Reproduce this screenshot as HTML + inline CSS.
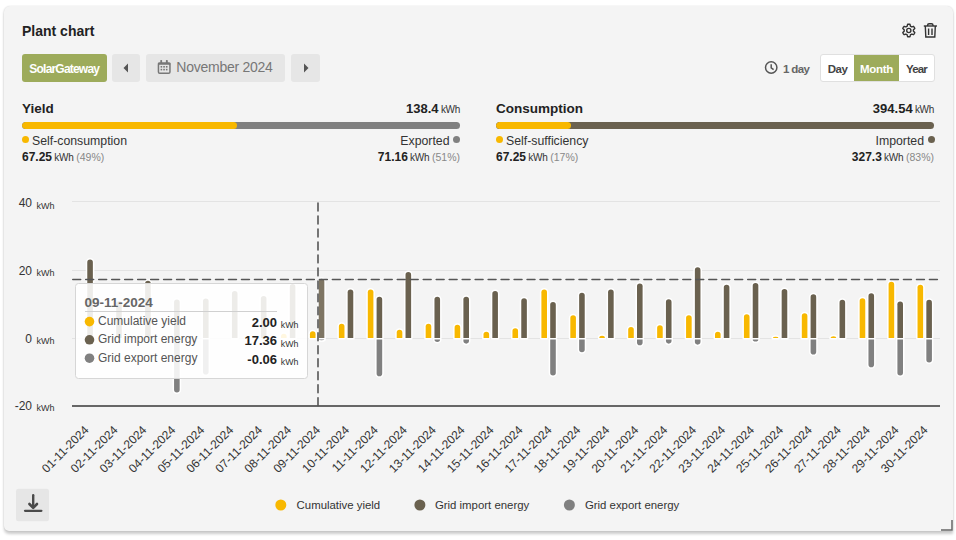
<!DOCTYPE html>
<html><head><meta charset="utf-8">
<style>
html,body{margin:0;padding:0;background:#fff;width:956px;height:540px;overflow:hidden;}
*{box-sizing:border-box;}
body{font-family:"Liberation Sans",sans-serif;color:#333;position:relative;}
.card{position:absolute;left:3.5px;top:6px;width:949.5px;height:524.7px;background:#f4f4f4;border-radius:6px 6px 0 5px;
 box-shadow:0 2.5px 3px rgba(0,0,0,0.2),0 0 1.5px rgba(0,0,0,0.14);}
.abs{position:absolute;white-space:nowrap;}
.btn{position:absolute;border-radius:3px;}
</style></head><body>
<div class="card"></div>
<div class="abs" style="left:22px;top:23px;font-size:14px;font-weight:bold;color:#222;line-height:17px;">Plant chart</div>

<svg class="abs" style="left:0;top:0" width="956" height="540" viewBox="0 0 956 540">
 <!-- gear -->
 <g fill="none" stroke="#333" stroke-width="1.4">
  <path d="M908.8,24.2L909.2,24.2L909.6,24.3L910.0,24.3L910.2,25.1L910.3,25.9L910.6,26.3L910.8,26.4L911.1,26.5L911.4,26.7L911.6,26.9L912.0,26.9L912.7,26.6L913.5,26.3L913.8,26.7L914.0,27.0L914.3,27.4L914.5,27.7L914.6,28.1L914.8,28.5L914.2,29.1L913.5,29.6L913.4,29.9L913.4,30.2L913.4,30.5L913.4,30.8L913.4,31.1L913.5,31.4L914.2,31.9L914.8,32.5L914.6,32.9L914.5,33.3L914.3,33.6L914.0,34.0L913.8,34.3L913.5,34.7L912.7,34.4L912.0,34.1L911.6,34.1L911.4,34.3L911.1,34.5L910.8,34.6L910.6,34.7L910.3,35.1L910.2,35.9L910.0,36.7L909.6,36.7L909.2,36.8L908.8,36.8L908.4,36.8L908.0,36.7L907.6,36.7L907.4,35.9L907.3,35.1L907.0,34.7L906.8,34.6L906.5,34.5L906.2,34.3L906.0,34.1L905.6,34.1L904.9,34.4L904.1,34.7L903.8,34.3L903.6,34.0L903.3,33.7L903.1,33.3L903.0,32.9L902.8,32.5L903.4,31.9L904.1,31.4L904.2,31.1L904.2,30.8L904.2,30.5L904.2,30.2L904.2,29.9L904.1,29.6L903.4,29.1L902.8,28.5L903.0,28.1L903.1,27.7L903.3,27.3L903.6,27.0L903.8,26.7L904.1,26.3L904.9,26.6L905.6,26.9L906.0,26.9L906.2,26.7L906.5,26.5L906.8,26.4L907.0,26.3L907.3,25.9L907.4,25.1L907.6,24.3L908.0,24.3L908.4,24.2Z" stroke-linejoin="round"/>
  <circle cx="908.8" cy="30.5" r="2.1"/>
 </g>
 <!-- trash -->
 <g fill="none" stroke="#333" stroke-width="1.4">
  <path d="M923.8,26 h13.2"/>
  <path d="M927.6,26 V25.2 Q927.6,23.7 929.1,23.7 H931.5 Q933,23.7 933,25.2 V26"/>
  <path d="M925.3,26 L925.8,37 H934.8 L935.3,26"/>
  <path d="M928.6,28.5 v6.5 M932,28.5 v6.5"/>
 </g>
</svg>

<div class="btn" style="left:22px;top:54px;width:85px;height:28px;background:#9dab5b;color:#fff;font-weight:bold;font-size:12px;line-height:30px;text-align:center;letter-spacing:-0.8px;text-indent:-0.5px;">SolarGateway</div>
<div class="btn" style="left:112px;top:54px;width:28px;height:28px;background:#e6e6e6;"></div>
<svg class="abs" style="left:112px;top:54px" width="28" height="28"><path d="M11.5,14 L16,9.5 L16,18.5 Z" fill="#555"/></svg>
<div class="btn" style="left:146px;top:54px;width:139px;height:28px;background:#e6e6e6;"></div>
<svg class="abs" style="left:154px;top:57px" width="20" height="20" viewBox="0 0 20 20">
 <rect x="4.45" y="6.15" width="11.5" height="10.1" rx="1.3" fill="none" stroke="#777" stroke-width="1.5"/>
 <rect x="3.8" y="5.4" width="12.8" height="2.3" rx="1" fill="#777"/>
 <rect x="6.3" y="3.1" width="1.8" height="3" rx="0.6" fill="#777"/><rect x="11.9" y="3.1" width="1.9" height="3" rx="0.6" fill="#777"/>
 <g fill="#777"><rect x="6.6" y="9.0" width="1.6" height="1.6"/><rect x="9.25" y="9.0" width="1.6" height="1.6"/><rect x="11.9" y="9.0" width="1.6" height="1.6"/>
 <rect x="6.6" y="11.8" width="1.6" height="1.6"/><rect x="9.25" y="11.8" width="1.6" height="1.6"/><rect x="11.9" y="11.8" width="1.6" height="1.6"/></g>
</svg>
<div class="abs" style="left:176.3px;top:59.3px;font-size:14px;line-height:17px;color:#777;letter-spacing:-0.25px;">November 2024</div>
<div class="btn" style="left:291px;top:54px;width:29px;height:28px;background:#e6e6e6;"></div>
<svg class="abs" style="left:291px;top:54px" width="29" height="28"><path d="M17.5,14 L13,9.5 L13,18.5 Z" fill="#555"/></svg>

<svg class="abs" style="left:764px;top:60px" width="15" height="15" viewBox="0 0 15 15">
 <circle cx="7.2" cy="7.5" r="5.7" fill="none" stroke="#555" stroke-width="1.5"/>
 <path d="M7.2,4.2 V7.8 L9.6,9.6" fill="none" stroke="#555" stroke-width="1.5"/>
</svg>
<div class="abs" style="left:783px;top:61.5px;font-size:11.5px;line-height:15px;color:#666;font-weight:bold;letter-spacing:-0.65px;">1 day</div>

<div class="btn" style="left:820px;top:54px;width:115px;height:28px;background:#fff;border:1px solid #e0e0e0;border-radius:3px;"></div>
<div class="abs" style="left:854px;top:55px;width:45px;height:26px;background:#9dab5b;"></div>
<div class="abs" style="left:821px;top:55.5px;width:33px;line-height:26px;font-size:11.5px;font-weight:bold;text-align:center;color:#444;letter-spacing:-0.5px;">Day</div>
<div class="abs" style="left:854px;top:55.5px;width:45px;line-height:26px;font-size:11.5px;font-weight:bold;text-align:center;color:#fff;letter-spacing:-0.3px;">Month</div>
<div class="abs" style="left:899px;top:55.5px;width:35px;line-height:26px;font-size:11.5px;font-weight:bold;text-align:center;color:#444;letter-spacing:-0.85px;">Year</div>

<!-- yield -->
<div class="abs" style="left:22px;top:101px;font-size:13.5px;font-weight:bold;color:#222;line-height:15px;">Yield</div>
<div class="abs" style="left:300px;width:160px;top:101px;text-align:right;line-height:15px;color:#222;font-size:10px;"><b style="font-size:13px">138.4</b> <span style="font-size:10px;color:#333;letter-spacing:-0.3px;margin-left:-0.5px">kWh</span></div>
<div class="abs" style="left:22px;top:122px;width:438px;height:7px;border-radius:3.5px;background:#808080;overflow:hidden;"><div style="width:49%;height:7px;background:#f8b800;border-radius:3.5px;"></div></div>
<div class="abs" style="left:21.5px;top:136.3px;width:7px;height:7px;border-radius:50%;background:#f8b800;"></div>
<div class="abs" style="left:32px;top:133px;font-size:12.3px;line-height:16px;color:#333;">Self-consumption</div>
<div class="abs" style="left:300px;width:149.5px;top:133px;text-align:right;font-size:12.3px;line-height:16px;color:#333;">Exported</div>
<div class="abs" style="left:453px;top:136.3px;width:7px;height:7px;border-radius:50%;background:#808080;"></div>
<div class="abs" style="left:22px;top:150px;line-height:14px;color:#222;font-size:10px;"><b style="font-size:12px">67.25</b> <span style="font-size:10px;color:#333;letter-spacing:-0.3px;margin-left:-0.5px">kWh</span> <span style="font-size:10.5px;color:#888">(49%)</span></div>
<div class="abs" style="left:300px;width:160px;text-align:right;top:150px;line-height:14px;color:#222;font-size:10px;"><b style="font-size:12px">71.16</b> <span style="font-size:10px;color:#333;letter-spacing:-0.3px;margin-left:-0.5px">kWh</span> <span style="font-size:10.5px;color:#888">(51%)</span></div>

<!-- consumption -->
<div class="abs" style="left:496px;top:101px;font-size:13.5px;font-weight:bold;color:#222;line-height:15px;">Consumption</div>
<div class="abs" style="left:774px;width:160px;top:101px;text-align:right;line-height:15px;color:#222;font-size:10px;"><b style="font-size:13px">394.54</b> <span style="font-size:10px;color:#333;letter-spacing:-0.3px;margin-left:-0.5px">kWh</span></div>
<div class="abs" style="left:496px;top:122px;width:438px;height:7px;border-radius:3.5px;background:#6a614f;overflow:hidden;"><div style="width:calc(17% + 0.5px);height:7px;background:#f8b800;border-radius:3.5px;"></div></div>
<div class="abs" style="left:495.5px;top:136.3px;width:7px;height:7px;border-radius:50%;background:#f8b800;"></div>
<div class="abs" style="left:506px;top:133px;font-size:12.3px;line-height:16px;color:#333;">Self-sufficiency</div>
<div class="abs" style="left:774px;width:150px;top:133px;text-align:right;font-size:12.3px;line-height:16px;color:#333;">Imported</div>
<div class="abs" style="left:927.6px;top:136.3px;width:7px;height:7px;border-radius:50%;background:#6a614f;"></div>
<div class="abs" style="left:496px;top:150px;line-height:14px;color:#222;font-size:10px;"><b style="font-size:12px">67.25</b> <span style="font-size:10px;color:#333;letter-spacing:-0.3px;margin-left:-0.5px">kWh</span> <span style="font-size:10.5px;color:#888">(17%)</span></div>
<div class="abs" style="left:774px;width:160px;text-align:right;top:150px;line-height:14px;color:#222;font-size:10px;"><b style="font-size:12px">327.3</b> <span style="font-size:10px;color:#333;letter-spacing:-0.3px;margin-left:-0.5px">kWh</span> <span style="font-size:10.5px;color:#888">(83%)</span></div>

<!-- chart -->
<svg class="abs" style="left:0;top:0" width="956" height="540" viewBox="0 0 956 540" font-family="Liberation Sans, sans-serif">
 <g stroke="#e3e3e3" stroke-width="1">
  <path d="M72,201.5 H940 M72,270.5 H940 M72,338.5 H940"/>
 </g>
 <g font-size="12" fill="#333" text-anchor="end">
  <text x="32" y="206.7">40</text><text x="32" y="274.8">20</text><text x="32" y="342.8">0</text><text x="32" y="409.6">-20</text>
 </g>
 <g font-size="9" fill="#333">
  <text x="36.5" y="208.5">kWh</text><text x="36.5" y="275.9">kWh</text><text x="36.5" y="343.9">kWh</text><text x="36.5" y="411.1">kWh</text>
 </g>
 <g stroke="#fff" stroke-width="3" paint-order="stroke" stroke-linejoin="round">
<path d="M87.27,338.00 L87.27,262.23 A2.80,2.80 0 0 1 92.87,262.23 L92.87,338.00 Z" fill="#6a614f"/>
<path d="M116.20,338.00 L116.20,304.01 A2.80,2.80 0 0 1 121.80,304.01 L121.80,338.00 Z" fill="#6a614f"/>
<path d="M145.13,338.00 L145.13,283.46 A2.80,2.80 0 0 1 150.73,283.46 L150.73,338.00 Z" fill="#6a614f"/>
<path d="M174.07,338.00 L174.07,302.30 A2.80,2.80 0 0 1 179.67,302.30 L179.67,338.00 Z" fill="#6a614f"/>
<path d="M174.07,339.50 L174.07,389.81 A2.80,2.80 0 0 0 179.67,389.81 L179.67,339.50 Z" fill="#808080"/>
<path d="M203.00,338.00 L203.00,301.27 A2.80,2.80 0 0 1 208.60,301.27 L208.60,338.00 Z" fill="#6a614f"/>
<path d="M203.00,339.50 L203.00,371.66 A2.80,2.80 0 0 0 208.60,371.66 L208.60,339.50 Z" fill="#808080"/>
<path d="M231.93,338.00 L231.93,293.74 A2.80,2.80 0 0 1 237.53,293.74 L237.53,338.00 Z" fill="#6a614f"/>
<path d="M260.87,338.00 L260.87,298.87 A2.80,2.80 0 0 1 266.47,298.87 L266.47,338.00 Z" fill="#6a614f"/>
<path d="M281.00,338.00 L281.00,336.55 A2.80,2.80 0 0 1 286.60,336.55 L286.60,338.00 Z" fill="#f8b800"/>
<path d="M289.80,338.00 L289.80,286.88 A2.80,2.80 0 0 1 295.40,286.88 L295.40,338.00 Z" fill="#6a614f"/>
<path d="M309.93,338.00 L309.93,334.15 A2.80,2.80 0 0 1 315.53,334.15 L315.53,338.00 Z" fill="#f8b800"/>
<path d="M318.73,338.00 L318.73,281.54 A2.80,2.80 0 0 1 324.33,281.54 L324.33,338.00 Z" fill="#7e7563"/>
<path d="M318.73,339.50 L318.73,339.50 A2.80,-0.79 0 0 0 324.33,339.50 L324.33,339.50 Z" fill="#808080"/>
<path d="M338.87,338.00 L338.87,326.62 A2.80,2.80 0 0 1 344.47,326.62 L344.47,338.00 Z" fill="#f8b800"/>
<path d="M347.67,338.00 L347.67,292.37 A2.80,2.80 0 0 1 353.27,292.37 L353.27,338.00 Z" fill="#6a614f"/>
<path d="M367.80,338.00 L367.80,292.37 A2.80,2.80 0 0 1 373.40,292.37 L373.40,338.00 Z" fill="#f8b800"/>
<path d="M376.60,338.00 L376.60,299.56 A2.80,2.80 0 0 1 382.20,299.56 L382.20,338.00 Z" fill="#6a614f"/>
<path d="M376.60,339.50 L376.60,373.38 A2.80,2.80 0 0 0 382.20,373.38 L382.20,339.50 Z" fill="#808080"/>
<path d="M396.73,338.00 L396.73,332.44 A2.80,2.80 0 0 1 402.33,332.44 L402.33,338.00 Z" fill="#f8b800"/>
<path d="M405.53,338.00 L405.53,274.90 A2.80,2.80 0 0 1 411.13,274.90 L411.13,338.00 Z" fill="#6a614f"/>
<path d="M425.67,338.00 L425.67,326.62 A2.80,2.80 0 0 1 431.27,326.62 L431.27,338.00 Z" fill="#f8b800"/>
<path d="M434.47,338.00 L434.47,299.56 A2.80,2.80 0 0 1 440.07,299.56 L440.07,338.00 Z" fill="#6a614f"/>
<path d="M434.47,339.50 L434.47,339.50 A2.80,2.43 0 0 0 440.07,339.50 L440.07,339.50 Z" fill="#808080"/>
<path d="M454.60,338.00 L454.60,327.64 A2.80,2.80 0 0 1 460.20,327.64 L460.20,338.00 Z" fill="#f8b800"/>
<path d="M463.40,338.00 L463.40,299.56 A2.80,2.80 0 0 1 469.00,299.56 L469.00,338.00 Z" fill="#6a614f"/>
<path d="M463.40,339.50 L463.40,340.84 A2.80,2.80 0 0 0 469.00,340.84 L469.00,339.50 Z" fill="#808080"/>
<path d="M483.53,338.00 L483.53,334.49 A2.80,2.80 0 0 1 489.13,334.49 L489.13,338.00 Z" fill="#f8b800"/>
<path d="M492.33,338.00 L492.33,293.74 A2.80,2.80 0 0 1 497.93,293.74 L497.93,338.00 Z" fill="#6a614f"/>
<path d="M512.47,338.00 L512.47,331.07 A2.80,2.80 0 0 1 518.07,331.07 L518.07,338.00 Z" fill="#f8b800"/>
<path d="M521.27,338.00 L521.27,300.93 A2.80,2.80 0 0 1 526.87,300.93 L526.87,338.00 Z" fill="#6a614f"/>
<path d="M541.40,338.00 L541.40,292.37 A2.80,2.80 0 0 1 547.00,292.37 L547.00,338.00 Z" fill="#f8b800"/>
<path d="M550.20,338.00 L550.20,304.69 A2.80,2.80 0 0 1 555.80,304.69 L555.80,338.00 Z" fill="#6a614f"/>
<path d="M550.20,339.50 L550.20,372.69 A2.80,2.80 0 0 0 555.80,372.69 L555.80,339.50 Z" fill="#808080"/>
<path d="M570.33,338.00 L570.33,318.05 A2.80,2.80 0 0 1 575.93,318.05 L575.93,338.00 Z" fill="#f8b800"/>
<path d="M579.13,338.00 L579.13,295.45 A2.80,2.80 0 0 1 584.73,295.45 L584.73,338.00 Z" fill="#6a614f"/>
<path d="M579.13,339.50 L579.13,349.40 A2.80,2.80 0 0 0 584.73,349.40 L584.73,339.50 Z" fill="#808080"/>
<path d="M599.27,338.00 L599.27,338.00 A2.80,2.20 0 0 1 604.87,338.00 L604.87,338.00 Z" fill="#f8b800"/>
<path d="M608.07,338.00 L608.07,292.37 A2.80,2.80 0 0 1 613.67,292.37 L613.67,338.00 Z" fill="#6a614f"/>
<path d="M628.20,338.00 L628.20,329.70 A2.80,2.80 0 0 1 633.80,329.70 L633.80,338.00 Z" fill="#f8b800"/>
<path d="M637.00,338.00 L637.00,286.20 A2.80,2.80 0 0 1 642.60,286.20 L642.60,338.00 Z" fill="#6a614f"/>
<path d="M637.00,339.50 L637.00,342.55 A2.80,2.80 0 0 0 642.60,342.55 L642.60,339.50 Z" fill="#808080"/>
<path d="M657.13,338.00 L657.13,327.99 A2.80,2.80 0 0 1 662.73,327.99 L662.73,338.00 Z" fill="#f8b800"/>
<path d="M665.93,338.00 L665.93,301.95 A2.80,2.80 0 0 1 671.53,301.95 L671.53,338.00 Z" fill="#6a614f"/>
<path d="M665.93,339.50 L665.93,340.84 A2.80,2.80 0 0 0 671.53,340.84 L671.53,339.50 Z" fill="#808080"/>
<path d="M686.07,338.00 L686.07,318.05 A2.80,2.80 0 0 1 691.67,318.05 L691.67,338.00 Z" fill="#f8b800"/>
<path d="M694.87,338.00 L694.87,270.10 A2.80,2.80 0 0 1 700.47,270.10 L700.47,338.00 Z" fill="#6a614f"/>
<path d="M694.87,339.50 L694.87,341.87 A2.80,2.80 0 0 0 700.47,341.87 L700.47,339.50 Z" fill="#808080"/>
<path d="M715.00,338.00 L715.00,334.49 A2.80,2.80 0 0 1 720.60,334.49 L720.60,338.00 Z" fill="#f8b800"/>
<path d="M723.80,338.00 L723.80,287.57 A2.80,2.80 0 0 1 729.40,287.57 L729.40,338.00 Z" fill="#6a614f"/>
<path d="M743.93,338.00 L743.93,317.02 A2.80,2.80 0 0 1 749.53,317.02 L749.53,338.00 Z" fill="#f8b800"/>
<path d="M752.73,338.00 L752.73,285.86 A2.80,2.80 0 0 1 758.33,285.86 L758.33,338.00 Z" fill="#6a614f"/>
<path d="M752.73,339.50 L752.73,339.50 A2.80,2.08 0 0 0 758.33,339.50 L758.33,339.50 Z" fill="#808080"/>
<path d="M772.87,338.00 L772.87,338.00 A2.80,1.17 0 0 1 778.47,338.00 L778.47,338.00 Z" fill="#f8b800"/>
<path d="M781.67,338.00 L781.67,291.68 A2.80,2.80 0 0 1 787.27,291.68 L787.27,338.00 Z" fill="#6a614f"/>
<path d="M801.80,338.00 L801.80,316.00 A2.80,2.80 0 0 1 807.40,316.00 L807.40,338.00 Z" fill="#f8b800"/>
<path d="M810.60,338.00 L810.60,297.16 A2.80,2.80 0 0 1 816.20,297.16 L816.20,338.00 Z" fill="#6a614f"/>
<path d="M810.60,339.50 L810.60,351.80 A2.80,2.80 0 0 0 816.20,351.80 L816.20,339.50 Z" fill="#808080"/>
<path d="M830.73,338.00 L830.73,338.00 A2.80,1.86 0 0 1 836.33,338.00 L836.33,338.00 Z" fill="#f8b800"/>
<path d="M839.53,338.00 L839.53,302.64 A2.80,2.80 0 0 1 845.13,302.64 L845.13,338.00 Z" fill="#6a614f"/>
<path d="M859.67,338.00 L859.67,300.93 A2.80,2.80 0 0 1 865.27,300.93 L865.27,338.00 Z" fill="#f8b800"/>
<path d="M868.47,338.00 L868.47,296.13 A2.80,2.80 0 0 1 874.07,296.13 L874.07,338.00 Z" fill="#6a614f"/>
<path d="M868.47,339.50 L868.47,364.47 A2.80,2.80 0 0 0 874.07,364.47 L874.07,339.50 Z" fill="#808080"/>
<path d="M888.60,338.00 L888.60,284.49 A2.80,2.80 0 0 1 894.20,284.49 L894.20,338.00 Z" fill="#f8b800"/>
<path d="M897.40,338.00 L897.40,304.35 A2.80,2.80 0 0 1 903.00,304.35 L903.00,338.00 Z" fill="#6a614f"/>
<path d="M897.40,339.50 L897.40,372.69 A2.80,2.80 0 0 0 903.00,372.69 L903.00,339.50 Z" fill="#808080"/>
<path d="M917.53,338.00 L917.53,287.57 A2.80,2.80 0 0 1 923.13,287.57 L923.13,338.00 Z" fill="#f8b800"/>
<path d="M926.33,338.00 L926.33,302.64 A2.80,2.80 0 0 1 931.93,302.64 L931.93,338.00 Z" fill="#6a614f"/>
<path d="M926.33,339.50 L926.33,359.68 A2.80,2.80 0 0 0 931.93,359.68 L931.93,339.50 Z" fill="#808080"/>
 </g>
 <path d="M72,406 H940" stroke="#666" stroke-width="2"/>
 <g font-size="12" fill="#333">
 <text x="89.47" y="430.7" transform="rotate(-45 89.47 430.7)" text-anchor="end">01-11-2024</text>
<text x="118.40" y="430.7" transform="rotate(-45 118.40 430.7)" text-anchor="end">02-11-2024</text>
<text x="147.33" y="430.7" transform="rotate(-45 147.33 430.7)" text-anchor="end">03-11-2024</text>
<text x="176.27" y="430.7" transform="rotate(-45 176.27 430.7)" text-anchor="end">04-11-2024</text>
<text x="205.20" y="430.7" transform="rotate(-45 205.20 430.7)" text-anchor="end">05-11-2024</text>
<text x="234.13" y="430.7" transform="rotate(-45 234.13 430.7)" text-anchor="end">06-11-2024</text>
<text x="263.07" y="430.7" transform="rotate(-45 263.07 430.7)" text-anchor="end">07-11-2024</text>
<text x="292.00" y="430.7" transform="rotate(-45 292.00 430.7)" text-anchor="end">08-11-2024</text>
<text x="320.93" y="430.7" transform="rotate(-45 320.93 430.7)" text-anchor="end">09-11-2024</text>
<text x="349.87" y="430.7" transform="rotate(-45 349.87 430.7)" text-anchor="end">10-11-2024</text>
<text x="378.80" y="430.7" transform="rotate(-45 378.80 430.7)" text-anchor="end">11-11-2024</text>
<text x="407.73" y="430.7" transform="rotate(-45 407.73 430.7)" text-anchor="end">12-11-2024</text>
<text x="436.67" y="430.7" transform="rotate(-45 436.67 430.7)" text-anchor="end">13-11-2024</text>
<text x="465.60" y="430.7" transform="rotate(-45 465.60 430.7)" text-anchor="end">14-11-2024</text>
<text x="494.53" y="430.7" transform="rotate(-45 494.53 430.7)" text-anchor="end">15-11-2024</text>
<text x="523.47" y="430.7" transform="rotate(-45 523.47 430.7)" text-anchor="end">16-11-2024</text>
<text x="552.40" y="430.7" transform="rotate(-45 552.40 430.7)" text-anchor="end">17-11-2024</text>
<text x="581.33" y="430.7" transform="rotate(-45 581.33 430.7)" text-anchor="end">18-11-2024</text>
<text x="610.27" y="430.7" transform="rotate(-45 610.27 430.7)" text-anchor="end">19-11-2024</text>
<text x="639.20" y="430.7" transform="rotate(-45 639.20 430.7)" text-anchor="end">20-11-2024</text>
<text x="668.13" y="430.7" transform="rotate(-45 668.13 430.7)" text-anchor="end">21-11-2024</text>
<text x="697.07" y="430.7" transform="rotate(-45 697.07 430.7)" text-anchor="end">22-11-2024</text>
<text x="726.00" y="430.7" transform="rotate(-45 726.00 430.7)" text-anchor="end">23-11-2024</text>
<text x="754.93" y="430.7" transform="rotate(-45 754.93 430.7)" text-anchor="end">24-11-2024</text>
<text x="783.87" y="430.7" transform="rotate(-45 783.87 430.7)" text-anchor="end">25-11-2024</text>
<text x="812.80" y="430.7" transform="rotate(-45 812.80 430.7)" text-anchor="end">26-11-2024</text>
<text x="841.73" y="430.7" transform="rotate(-45 841.73 430.7)" text-anchor="end">27-11-2024</text>
<text x="870.67" y="430.7" transform="rotate(-45 870.67 430.7)" text-anchor="end">28-11-2024</text>
<text x="899.60" y="430.7" transform="rotate(-45 899.60 430.7)" text-anchor="end">29-11-2024</text>
<text x="928.53" y="430.7" transform="rotate(-45 928.53 430.7)" text-anchor="end">30-11-2024</text>
 </g>
 <!-- crosshairs -->
 <path d="M318,203.1 V405.5" stroke="#555" stroke-width="1.6" stroke-dasharray="7.85,5.13" stroke-linecap="round"/>
 <path d="M72.8,279.5 H940" stroke="#555" stroke-width="1.6" stroke-dasharray="7.85,5.13" stroke-linecap="round"/>
 <!-- tooltip -->
 <rect x="75.5" y="283.5" width="232" height="95" rx="3" ry="3" fill="rgba(255,255,255,0.88)" stroke="#d6d6d6" stroke-width="1"/>
 <text x="84.4" y="306.6" font-size="13.5" font-weight="bold" fill="#666">09-11-2024</text>
 <path d="M85,311.5 H277" stroke="#d0d0d0" stroke-width="1"/>
 <circle cx="89.5" cy="321.6" r="4.8" fill="#f8b800"/>
 <circle cx="89.5" cy="339.8" r="4.8" fill="#6a614f"/>
 <circle cx="89.5" cy="358.2" r="4.8" fill="#808080"/>
 <g font-size="12" fill="#555">
  <text x="98" y="324.5">Cumulative yield</text>
  <text x="98" y="343.4">Grid import energy</text>
  <text x="98" y="361.9">Grid export energy</text>
 </g>
 <g font-size="13" font-weight="bold" fill="#222" text-anchor="end">
  <text x="277" y="326.7">2.00</text>
  <text x="277" y="345.3">17.36</text>
  <text x="277" y="364.1">-0.06</text>
 </g>
 <g font-size="8.8" fill="#333">
  <text x="280.8" y="327.8">kWh</text><text x="280.8" y="346.6">kWh</text><text x="280.8" y="365.4">kWh</text>
 </g>
 <!-- legend -->
 <circle cx="280.8" cy="505" r="5.5" fill="#f8b800"/>
 <circle cx="419.9" cy="505" r="5.5" fill="#6a614f"/>
 <circle cx="569.4" cy="505" r="5.5" fill="#808080"/>
 <g font-size="11.4" fill="#333">
  <text x="296.6" y="509.3">Cumulative yield</text>
  <text x="434.9" y="509.3">Grid import energy</text>
  <text x="584.9" y="509.3">Grid export energy</text>
 </g>
 <!-- download btn -->
 <rect x="16" y="488.7" width="33" height="32.6" rx="2.5" fill="#e6e6e6"/>
 <path d="M33.2,495.3 V507" stroke="#4a4a4a" stroke-width="2.4" stroke-linecap="round"/>
 <path d="M29.4,504 L33.2,507.8 L37,504" fill="none" stroke="#4a4a4a" stroke-width="2.6" stroke-linecap="round" stroke-linejoin="round"/>
 <path d="M25,510.8 H41.4" stroke="#4a4a4a" stroke-width="2.2" stroke-linecap="round"/>
 <!-- resize handle -->
 <path d="M941,530.1 H952 V520" fill="none" stroke="#666" stroke-width="1.5"/>
</svg>
</body></html>
